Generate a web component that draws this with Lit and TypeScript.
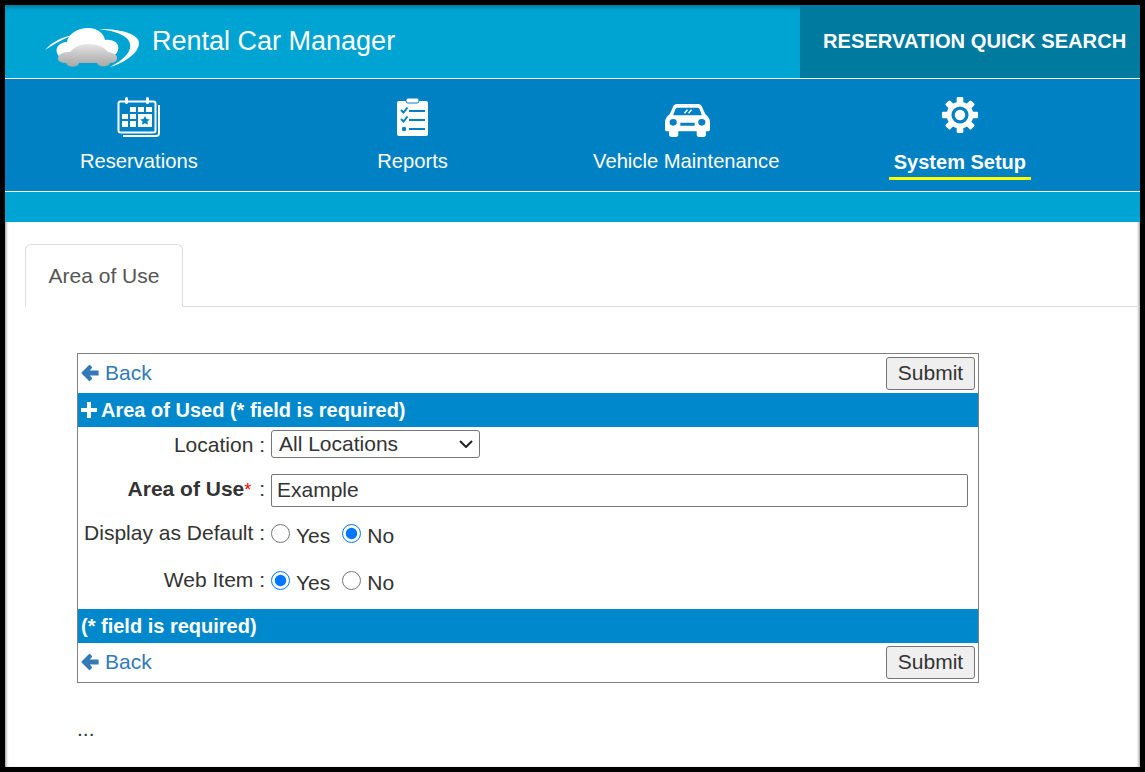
import { LitElement, css, html, svg } from 'lit';
import { customElement } from 'lit/decorators.js';

const logo = svg`
  <svg width="96" height="44" viewBox="0 0 96 44">
    <defs>
      <linearGradient id="carFill" x1="0" y1="0" x2="0" y2="1">
        <stop offset="0" stop-color="#e6e6e6"/>
        <stop offset="0.45" stop-color="#c6c6c6"/>
        <stop offset="1" stop-color="#a8a8a8"/>
      </linearGradient>
    </defs>
    <path d="M1 24 C8 16 18 11 29 9 C19 13 10 18 1 24Z" fill="#fff"/>
    <path d="M55 3 C80 3 95 9 95 17 C95 27 80 37 66 41 C78 35 88 26 86 18 C85 10 72 5 55 3Z" fill="#fff"/>
    <path d="M13 27 C11 21 16 16 23 16 C24 8 34 2 44 2 C54 2 60 8 61 14 C69 13 76 17 74 24 C73 28 70 30 65 30 L18 32 C15 31 14 29 13 27Z" fill="#fff"/>
    <path d="M14 33 C14 28 18 26 26 26 C30 21 36 18 45 18 C54 18 60 21 64 26 C70 27 74 29 73 33 C72 36 70 37 66 37 C65 41 55 42 53 37 L35 37 C34 42 24 42 22 37 C18 37 15 36 14 33Z" fill="url(#carFill)"/>
  </svg>`;

const calendarIcon = svg`
  <svg class="soft" width="44" height="42" viewBox="0 0 44 42" fill="none" stroke="#fff">
    <rect x="1.500" y="5.500" width="37" height="31" rx="2" stroke-width="2"/>
    <path d="M41 10 h1 v27 a3 3 0 0 1 -3 3 H6" stroke-width="2"/>
    <rect x="8" y="1" width="3" height="7" rx="1.500" fill="#fff" stroke="none"/>
    <rect x="29" y="1" width="3" height="7" rx="1.500" fill="#fff" stroke="none"/>
    <g fill="#fff" stroke="none">
      <rect x="13" y="11" width="6" height="5"/><rect x="21" y="11" width="6" height="5"/><rect x="29" y="11" width="6" height="5"/>
      <rect x="5" y="18" width="6" height="5"/><rect x="13" y="18" width="6" height="5"/>
      <rect x="5" y="25" width="6" height="6"/><rect x="13" y="25" width="6" height="6"/>
      <path d="M21 18 h14 v13 h-14Z M28 20 l1.500 3 3.300 .4 -2.400 2.200 .7 3.200 -3.100 -1.600 -3.100 1.600 .7 -3.200 -2.400 -2.200 3.300 -.4Z" fill-rule="evenodd"/>
    </g>
  </svg>`;

const reportIcon = svg`
  <svg class="soft report" width="33" height="38" viewBox="0 0 33 38">
    <path d="M3 3 h27 a2 2 0 0 1 2 2 v31 a2 2 0 0 1 -2 2 h-27 a2 2 0 0 1 -2 -2 v-31 a2 2 0 0 1 2 -2Z" fill="#fff"/>
    <rect x="10" y="0" width="13" height="5" rx="2" fill="#fff" stroke="#0081c4" stroke-width="1"/>
    <g fill="none" stroke="#0081c4" stroke-width="2">
      <path d="M5 12 l2.500 2.500 4 -5"/><path d="M5 21 l2.500 2.500 4 -5"/>
      <path d="M13 13 h16 M13 22 h16 M13 31 h16"/>
    </g>
    <circle cx="8" cy="31" r="2.200" fill="#0081c4"/>
  </svg>`;

const carIcon = svg`
  <svg class="soft car" width="45" height="34" viewBox="0 0 44 36" preserveAspectRatio="none">
    <path fill-rule="evenodd" fill="#fff" d="M12 1 H32 C35 1 36 3 37 6 L39.500 12 C42 14 44 17 44 20 V28 C44 29 43 30 42 30 H40 V34 C40 35 39 36 38 36 H33 C32 36 31 35 31 34 V30 H13 V34 C13 35 12 36 11 36 H6 C5 36 4 35 4 34 V30 H2 C1 30 0 29 0 28 V20 C0 17 2 14 4.500 12 L7 6 C8 3 9 1 12 1Z M12 5 C11 5 10.500 6 10 7 L8 13 H36 L34 7 C33.500 6 33 5 32 5Z M8 17 A3.500 3.500 0 1 0 8 24 A3.500 3.500 0 1 0 8 17Z M36 17 A3.500 3.500 0 1 0 36 24 A3.500 3.500 0 1 0 36 17Z M15 21 V24 H29 V21Z"/>
    <path d="M19 11 L22 7 M23 11 L26 7" stroke="#fff" stroke-width="1.500"/>
  </svg>`;

const gearIcon = svg`
  <svg class="soft gear" width="38" height="38" viewBox="0 0 40 40">
    <g fill="#fff">
      <circle cx="20" cy="20" r="14"/>
      <rect x="16.500" y="1" width="7" height="38" rx="1.500"/>
      <rect x="16.500" y="1" width="7" height="38" rx="1.500" transform="rotate(45 20 20)"/>
      <rect x="16.500" y="1" width="7" height="38" rx="1.500" transform="rotate(90 20 20)"/>
      <rect x="16.500" y="1" width="7" height="38" rx="1.500" transform="rotate(135 20 20)"/>
    </g>
    <circle cx="20" cy="20" r="9" fill="#0081c4"/>
    <circle cx="20" cy="20" r="5.500" fill="#fff"/>
  </svg>`;

const backArrow = svg`
  <svg width="18" height="18" viewBox="0 0 18 18">
    <path d="M8.500 1.500 L1 9 L8.500 16.500 L10.500 14.500 L7.500 11 H17 V7 H7.500 L10.500 3.500Z" fill="#337ab7" stroke="#337ab7" stroke-width="1.200" stroke-linejoin="round"/>
  </svg>`;

const plusIcon = svg`
  <svg width="16" height="16" viewBox="0 0 16 16"><path d="M6 0 H10 V6 H16 V10 H10 V16 H6 V10 H0 V6 H6Z" fill="#fff"/></svg>`;

const chevron = svg`
  <svg class="chevron" width="14" height="8" viewBox="0 0 14 8"><path d="M1 1 L7 7 L13 1" fill="none" stroke="#222" stroke-width="2"/></svg>`;

@customElement('app-root')
export class AppRoot extends LitElement {
  static styles = css`
    :host {
      display: block;
      height: 772px;
      box-sizing: border-box;
      padding: 5px;
      background: #000;
      font-family: 'Liberation Sans', Arial, sans-serif;
      color: #333;
      font-size: 21px;
    }
    .page {
      height: 762px;
      width: 1135px;
      display: flex;
      flex-direction: column;
      background: #fff;
      overflow: hidden;
    }
    .header {
      height: 73px;
      flex: none;
      display: flex;
      background: #00a4d3;
      border-bottom: 1px solid #fff;
      box-shadow: inset 0 5px 4px -3px rgba(0, 0, 0, 0.3);
    }
    .brand {
      flex: 1;
      display: flex;
      align-items: flex-start;
      padding-left: 39px;
      gap: 12px;
      color: #fff;
      font-size: 27px;
    }
    .brand svg { margin-top: 21px; filter: blur(0.4px); }
    .brand span { margin-top: 21px; }
    .quick {
      width: 340px;
      box-sizing: border-box;
      display: flex;
      align-items: center;
      padding-left: 23px;
      background: #007a9e;
      color: #fff;
      font-weight: bold;
      font-size: 20.15px;
      white-space: nowrap;
    }
    .nav {
      height: 112px;
      flex: none;
      background: #0081c4;
      border-bottom: 1px solid #fff;
    }
    .nav-items {
      display: grid;
      grid-template-columns: repeat(4, 273.7px);
      margin-left: -3px;
    }
    .nav-item {
      display: flex;
      flex-direction: column;
      align-items: center;
      color: #fff;
      font-size: 20.2px;
    }
    .nav-icon {
      height: 52px;
      margin-top: 12px;
      display: flex;
      align-items: center;
      justify-content: center;
    }
    .soft { filter: blur(0.4px); }
    .report { margin-left: -1px; }
    .car { margin: 6px 0 0 2px; }
    .gear { margin: -4px 0 0 1px; }
    .nav-label { padding: 7px 5px 0; line-height: 23px; }
    .nav-item.active .nav-label {
      font-size: 20px;
      font-weight: bold;
      padding-top: 8px;
      padding-bottom: 3px;
      border-bottom: 3px solid #ffff00;
    }
    .strip { height: 30px; flex: none; background: #00a4d3; }
    .content {
      flex: 1;
      padding: 22px 0 0 20px;
      box-shadow: inset 3px 0 3px -2px rgba(0, 0, 0, 0.45), inset -3px 0 3px -2px rgba(0, 0, 0, 0.45);
    }
    .tabs {
      height: 62px;
      border-bottom: 1px solid #ddd;
      display: flex;
    }
    .tab {
      width: 158px;
      height: 63px;
      box-sizing: border-box;
      border: 1px solid #ddd;
      border-bottom-color: #fff;
      border-radius: 6px 6px 0 0;
      background: #fff;
      color: #555;
      display: flex;
      align-items: center;
      justify-content: center;
    }
    .form {
      width: 902px;
      box-sizing: border-box;
      margin: 46px 0 0 52px;
      border: 1px solid #808080;
    }
    .actions {
      height: 39px;
      display: flex;
      align-items: center;
      justify-content: space-between;
      padding: 0 3px;
    }
    .back {
      display: flex;
      align-items: center;
      gap: 6px;
      margin-top: -2px;
      color: #337ab7;
      text-decoration: none;
    }
    button {
      width: 89px;
      height: 33px;
      padding: 0 0 2px;
      border: 1px solid #767676;
      border-radius: 3px;
      background: #efefef;
      color: #333;
      font: inherit;
    }
    .bar {
      height: 34px;
      display: flex;
      align-items: center;
      gap: 4px;
      padding-left: 3px;
      background: #0088cc;
      color: #fff;
      font-size: 20px;
      font-weight: bold;
    }
    .fields {
      display: grid;
      grid-template-columns: 187px 1fr;
      grid-template-rows: 39px 49px 47px 47px;
      column-gap: 6px;
    }
    .label { text-align: right; white-space: nowrap; padding-top: 6px; }
    .label.tall { padding-top: 11px; }
    .label b { font-weight: bold; }
    .req { color: #f00; font-size: 18px; padding-right: 2px; }
    .cell { display: flex; align-items: center; }
    .cell.select-cell { align-items: flex-start; }
    .cell.radios { padding-bottom: 10px; }
    .select-wrap {
      position: relative;
      width: 209px;
      height: 28px;
      margin-top: 3px;
    }
    select {
      appearance: none;
      display: block;
      width: 100%;
      height: 100%;
      padding: 0 0 2px 7px;
      box-sizing: border-box;
      font: inherit;
      color: #333;
      background: #fff;
      border: 1px solid #767676;
      border-radius: 3px;
    }
    .chevron {
      position: absolute;
      right: 7px;
      top: 10px;
      pointer-events: none;
    }
    input[type='text'] {
      width: 697px;
      height: 33px;
      box-sizing: border-box;
      padding: 0 5px 2px;
      font: inherit;
      color: #333;
      border: 1px solid #767676;
      border-radius: 2px;
    }
    input[type='radio'] { width: 19px; height: 19px; margin: 0 6px 0 0; }
    .opt { display: flex; align-items: center; margin-right: 12px; }
    .opt span { position: relative; top: 2px; }
    .dots { margin: 34px 0 0 52px; }
  `;

  private renderActions() {
    return html`
      <div class="actions">
        <a class="back" href="#">${backArrow}Back</a>
        <button>Submit</button>
      </div>
    `;
  }

  private renderNavItem(icon: unknown, label: string, active = false) {
    return html`
      <div class="nav-item ${active ? 'active' : ''}">
        <div class="nav-icon">${icon}</div>
        <div class="nav-label">${label}</div>
      </div>
    `;
  }

  private renderRadios(name: string, yes: boolean) {
    return html`
      <label class="opt"><input type="radio" name=${name} ?checked=${yes} /><span>Yes</span></label>
      <label class="opt"><input type="radio" name=${name} ?checked=${!yes} /><span>No</span></label>
    `;
  }

  render() {
    return html`
      <div class="page">
        <div class="header">
          <div class="brand">${logo}<span>Rental Car Manager</span></div>
          <div class="quick">RESERVATION QUICK SEARCH</div>
        </div>
        <div class="nav">
          <div class="nav-items">
            ${this.renderNavItem(calendarIcon, 'Reservations')}
            ${this.renderNavItem(reportIcon, 'Reports')}
            ${this.renderNavItem(carIcon, 'Vehicle Maintenance')}
            ${this.renderNavItem(gearIcon, 'System Setup', true)}
          </div>
        </div>
        <div class="strip"></div>
        <div class="content">
          <div class="tabs"><div class="tab">Area of Use</div></div>
          <div class="form">
            ${this.renderActions()}
            <div class="bar">${plusIcon}Area of Used (* field is required)</div>
            <div class="fields">
              <div class="label">Location :</div>
              <div class="cell select-cell">
                <div class="select-wrap">
                  <select><option>All Locations</option></select>
                  ${chevron}
                </div>
              </div>
              <div class="label tall"><b>Area of Use</b><span class="req">*</span> :</div>
              <div class="cell"><input type="text" value="Example" /></div>
              <div class="label">Display as Default :</div>
              <div class="cell radios">${this.renderRadios('def', false)}</div>
              <div class="label">Web Item :</div>
              <div class="cell radios">${this.renderRadios('web', true)}</div>
            </div>
            <div class="bar">(* field is required)</div>
            ${this.renderActions()}
          </div>
          <div class="dots">...</div>
        </div>
      </div>
    `;
  }
}
